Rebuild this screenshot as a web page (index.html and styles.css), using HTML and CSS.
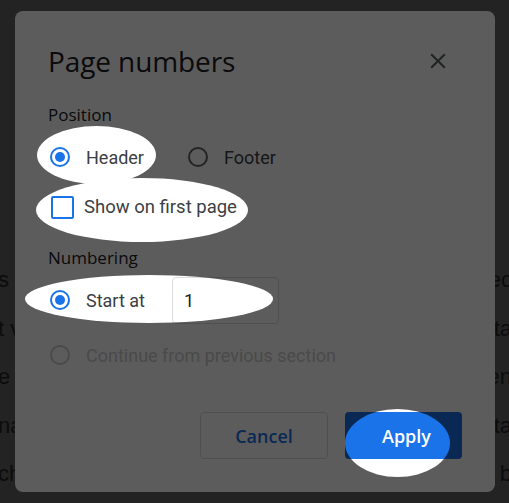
FILE: index.html
```html
<!DOCTYPE html>
<html lang="en">
<head>
    <meta charset="UTF-8">
    <meta name="viewport" content="width=device-width, initial-scale=1.0">
    <title>Page numbers</title>
    <link rel="stylesheet" href="styles.css">
</head>
<body>
    <!-- Document text behind the dialog -->
    <div class="doc">
        <div class="doc-line"><span>s v</span><span>ec</span></div>
        <div class="doc-line"><span>t v</span><span>ta</span></div>
        <div class="doc-line"><span>e t</span><span>en</span></div>
        <div class="doc-line"><span>na</span><span>ta</span></div>
        <div class="doc-line"><span>ch</span><span>s b</span></div>
    </div>

    <div class="dialog">
        <div class="dialog-head">
            <h1>Page numbers</h1>
            <svg class="close" viewBox="0 0 24 24" width="26" height="26">
                <path d="M19 6.41L17.59 5 12 10.59 6.41 5 5 6.41 10.59 12 5 17.59 6.41 19 12 13.41 17.59 19 19 17.59 13.41 12z"/>
            </svg>
        </div>

        <h2>Position</h2>
        <div class="row">
            <label class="opt"><span class="radio on"></span>Header</label>
            <label class="opt footer"><span class="radio"></span>Footer</label>
        </div>
        <div class="row check-row">
            <label class="opt"><span class="check"></span>Show on first page</label>
        </div>

        <h2 class="numbering">Numbering</h2>
        <div class="row start-row">
            <label class="opt"><span class="radio on"></span>Start at</label>
            <div class="num-input">1</div>
        </div>
        <div class="row cont-row">
            <label class="opt disabled"><span class="radio"></span>Continue from previous section</label>
        </div>

        <div class="actions">
            <button class="btn cancel">Cancel</button>
            <button class="btn apply">Apply</button>
        </div>
    </div>

    <!-- Tutorial spotlight overlay -->
    <svg class="spot" width="509" height="503" viewBox="0 0 509 503">
        <mask id="holes">
            <rect width="509" height="503" fill="white"/>
            <ellipse cx="96.5" cy="155" rx="59.5" ry="29" fill="black"/>
            <ellipse cx="142" cy="210" rx="106" ry="32" fill="black"/>
            <ellipse cx="149" cy="299" rx="124" ry="24" fill="black"/>
            <ellipse cx="397.5" cy="443" rx="52.5" ry="34" fill="black"/>
        </mask>
        <rect width="509" height="503" fill="rgba(0,0,0,0.64)" mask="url(#holes)"/>
    </svg>
</body>
</html>
```

FILE: styles.css
```css
body {
    margin: 0;
    width: 509px;
    height: 503px;
    overflow: hidden;
    background-color: #616161;
    font-family: Roboto, "Liberation Sans", sans-serif;
    position: relative;
}
.doc {
    padding-top: 256px;
    font-family: "Liberation Sans", Arial, sans-serif;
    font-size: 22px;
    color: #222;
}
.doc-line {
    height: 48.5px;
    line-height: 48px;
    display: flex;
    justify-content: space-between;
    margin: 0 -3px 0 -2px;
    white-space: nowrap;
}
.dialog {
    position: absolute;
    left: 15px;
    top: 11px;
    width: 480px;
    height: 481px;
    box-sizing: border-box;
    padding: 30px 33px 33px 33px;
    background-color: #fff;
    border-radius: 8px;
    display: flex;
    flex-direction: column;
}
.dialog-head {
    display: flex;
    justify-content: space-between;
    align-items: center;
    height: 40px;
}
h1 {
    margin: 0;
    font-family: "Open Sans", sans-serif;
    font-weight: 400;
    font-size: 28px;
    color: #202124;
    letter-spacing: -0.1px;
}
.close {
    fill: #5f6368;
    margin-right: 11px;
}
h2 {
    margin: 22px 0 0 0;
    font-family: "Open Sans", sans-serif;
    font-weight: 500;
    font-size: 17px;
    line-height: 24px;
    color: #202124;
}
h2.numbering {
    margin-top: 21px;
}
.row {
    display: flex;
    align-items: center;
    height: 36px;
    margin-top: 12px;
}
.check-row {
    margin-top: 14px;
}
.start-row {
    height: 48px;
    margin-top: 6px;
}
.cont-row {
    margin-top: 13px;
}
.opt {
    display: flex;
    align-items: center;
    font-size: 18px;
    color: #3c4043;
}
.check-row .opt {
    font-size: 18.5px;
}
.footer {
    margin-left: 42px;
}
.radio {
    width: 16px;
    height: 16px;
    border: 2px solid #5f6368;
    border-radius: 50%;
    margin: 0 16px 0 2px;
    position: relative;
}
.radio.on {
    border-color: #1a73e8;
}
.radio.on::after {
    content: "";
    position: absolute;
    left: 3px;
    top: 3px;
    width: 10px;
    height: 10px;
    border-radius: 50%;
    background-color: #1a73e8;
}
.check {
    width: 19px;
    height: 19px;
    border: 2px solid #1a73e8;
    border-radius: 2px;
    margin: 0 10px 0 3px;
}
.num-input {
    margin-left: 27px;
    width: 107px;
    height: 47px;
    box-sizing: border-box;
    border: 1px solid #dadce0;
    border-radius: 4px;
    padding-left: 11px;
    font-size: 18px;
    line-height: 45px;
    color: #202124;
}
.disabled {
    color: #cdcdcd;
}
.disabled .radio {
    border-color: #cdcdcd;
}
.actions {
    margin-top: auto;
    display: flex;
    justify-content: flex-end;
    gap: 17px;
}
.btn {
    height: 47px;
    border-radius: 4px;
    font-family: "Open Sans", sans-serif;
    font-weight: 600;
    font-size: 18px;
    cursor: pointer;
}
.cancel {
    width: 128px;
    background-color: #fff;
    border: 1px solid #dadce0;
    color: #1a73e8;
}
.apply {
    width: 117px;
    background-color: #1a73e8;
    border: none;
    color: #fff;
    padding-right: 0;
}
.spot {
    position: absolute;
    left: 0;
    top: 0;
}
```
